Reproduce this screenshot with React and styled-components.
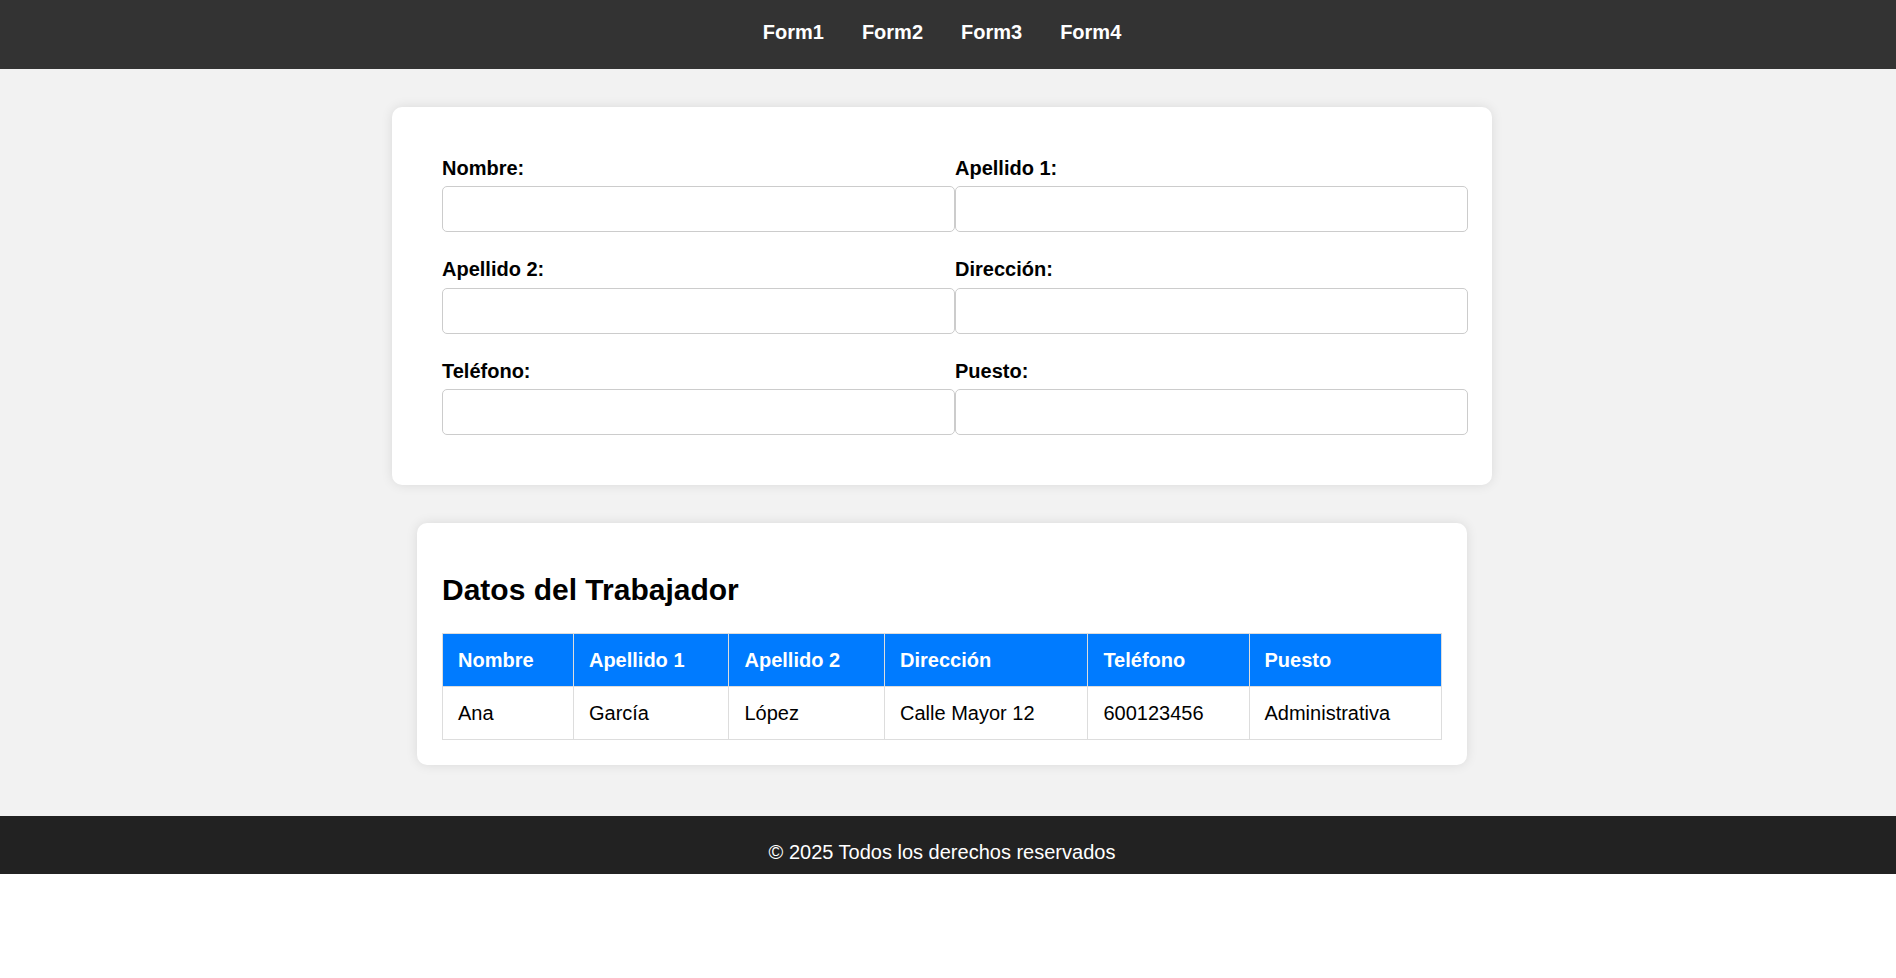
import React from 'react';
import styled, { createGlobalStyle } from 'styled-components';

const GlobalStyle = createGlobalStyle`
  html, body {
    margin: 0;
    padding: 0;
    background: #ffffff;
    font-family: "Liberation Sans", Arial, sans-serif;
    font-size: 20px;
    line-height: 22px;
    color: #000;
  }
  * {
    box-sizing: border-box;
  }
`;

// Top navigation
const NavBar = styled.nav`
  height: 69px;
  background: #333333;
  padding: 21px 12px 0 0;
`;

const NavList = styled.ul`
  display: flex;
  justify-content: center;
  gap: 38px;
  list-style: none;
  margin: 0;
  padding: 0;
`;

const NavLink = styled.a`
  color: #ffffff;
  font-weight: 700;
  font-size: 20px;
  line-height: 22px;
  text-decoration: none;
  cursor: pointer;
`;

// Main area
const Main = styled.main`
  background: #f2f2f2;
  display: flex;
  flex-direction: column;
  align-items: center;
  gap: 38px;
  padding: 38px 12px 51px 0;
`;

const Card = styled.section`
  width: ${({ $width }) => $width}px;
  background: #ffffff;
  border-radius: 10px;
  box-shadow: 0 0 12px rgba(0, 0, 0, 0.1);
  padding: ${({ $padding }) => $padding};
`;

const FormGrid = styled.form`
  display: grid;
  grid-template-columns: 1fr 1fr;
  row-gap: 26px;
  column-gap: 0;
`;

const Field = styled.div`
  display: flex;
  flex-direction: column;
`;

const Label = styled.label`
  display: block;
  font-weight: 700;
  font-size: 20px;
  line-height: 22px;
  margin-bottom: 7.25px;
`;

const Input = styled.input`
  width: 100%;
  height: 46px;
  border: 1px solid #cccccc;
  border-radius: 5px;
  background: #ffffff;
  padding: 0 12px;
  font-family: inherit;
  font-size: 16px;
  outline: none;
`;

const Title = styled.h2`
  font-size: 30px;
  line-height: 34px;
  font-weight: 700;
  margin: 25.5px 0 25.5px;
`;

const Table = styled.table`
  width: 100%;
  border-collapse: collapse;
  font-size: 20px;
  line-height: 22px;
`;

const HeadCell = styled.th`
  background: #007bff;
  color: #ffffff;
  font-weight: 700;
  text-align: left;
  padding: 15px;
  border: 1px solid #dddddd;
`;

const Cell = styled.td`
  text-align: left;
  padding: 15px;
  border: 1px solid #dddddd;
`;

const Footer = styled.footer`
  background: #222222;
  color: #ffffff;
  text-align: center;
  font-size: 20px;
  line-height: 22px;
  padding: 25.5px 12px 11px 0;
`;

const fields = [
  { id: 'nombre', label: 'Nombre:' },
  { id: 'apellido1', label: 'Apellido 1:' },
  { id: 'apellido2', label: 'Apellido 2:' },
  { id: 'direccion', label: 'Dirección:' },
  { id: 'telefono', label: 'Teléfono:' },
  { id: 'puesto', label: 'Puesto:' },
];

const columns = ['Nombre', 'Apellido 1', 'Apellido 2', 'Dirección', 'Teléfono', 'Puesto'];

const worker = ['Ana', 'García', 'López', 'Calle Mayor 12', '600123456', 'Administrativa'];

export default function App() {
  return (
    <>
      <GlobalStyle />
      <NavBar>
        <NavList>
          {['Form1', 'Form2', 'Form3', 'Form4'].map((name) => (
            <li key={name}>
              <NavLink href="#">{name}</NavLink>
            </li>
          ))}
        </NavList>
      </NavBar>

      <Main>
        <Card $width={1100} $padding="50px 24px 50px 50px">
          <FormGrid onSubmit={(e) => e.preventDefault()}>
            {fields.map((f) => (
              <Field key={f.id}>
                <Label htmlFor={f.id}>{f.label}</Label>
                <Input id={f.id} type="text" />
              </Field>
            ))}
          </FormGrid>
        </Card>

        <Card $width={1050} $padding="25px">
          <Title>Datos del Trabajador</Title>
          <Table>
            <thead>
              <tr>
                {columns.map((c) => (
                  <HeadCell key={c}>{c}</HeadCell>
                ))}
              </tr>
            </thead>
            <tbody>
              <tr>
                {worker.map((v) => (
                  <Cell key={v}>{v}</Cell>
                ))}
              </tr>
            </tbody>
          </Table>
        </Card>
      </Main>

      <Footer>© 2025 Todos los derechos reservados</Footer>
    </>
  );
}
